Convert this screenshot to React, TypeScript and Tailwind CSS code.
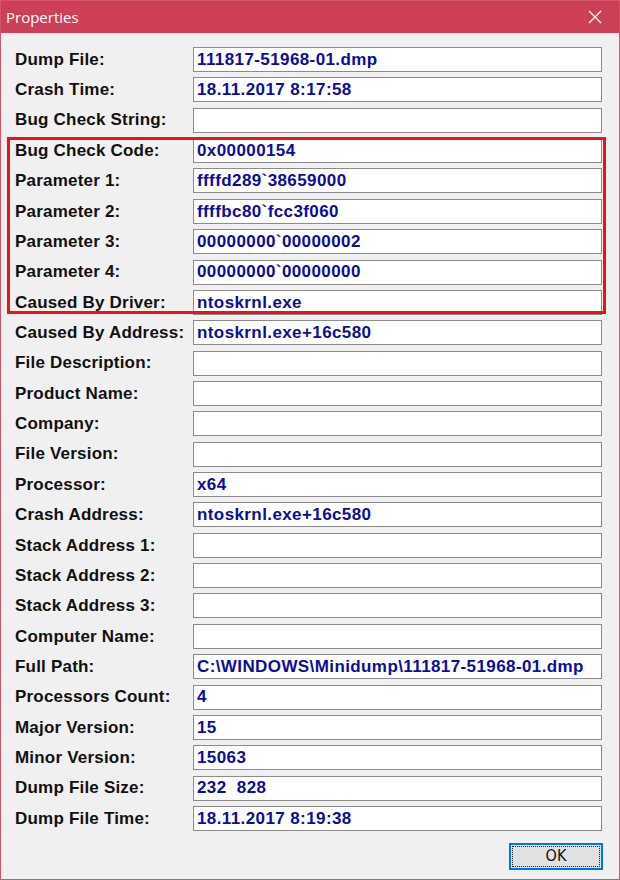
const rows: [string, string][] = [
  ["Dump File:", "111817-51968-01.dmp"],
  ["Crash Time:", "18.11.2017 8:17:58"],
  ["Bug Check String:", ""],
  ["Bug Check Code:", "0x00000154"],
  ["Parameter 1:", "ffffd289`38659000"],
  ["Parameter 2:", "ffffbc80`fcc3f060"],
  ["Parameter 3:", "00000000`00000002"],
  ["Parameter 4:", "00000000`00000000"],
  ["Caused By Driver:", "ntoskrnl.exe"],
  ["Caused By Address:", "ntoskrnl.exe+16c580"],
  ["File Description:", ""],
  ["Product Name:", ""],
  ["Company:", ""],
  ["File Version:", ""],
  ["Processor:", "x64"],
  ["Crash Address:", "ntoskrnl.exe+16c580"],
  ["Stack Address 1:", ""],
  ["Stack Address 2:", ""],
  ["Stack Address 3:", ""],
  ["Computer Name:", ""],
  ["Full Path:", "C:\\WINDOWS\\Minidump\\111817-51968-01.dmp"],
  ["Processors Count:", "4"],
  ["Major Version:", "15"],
  ["Minor Version:", "15063"],
  ["Dump File Size:", "232  828"],
  ["Dump File Time:", "18.11.2017 8:19:38"],
];

export default function App() {
  return (
    <div className="w-[620px] h-[880px] flex flex-col bg-[#f0f0f0] border border-[#d4546a] font-['Liberation_Sans',Arial,sans-serif]">
      {/* title bar */}
      <div className="h-[32px] shrink-0 bg-[#cd3f57] flex items-center justify-between pl-[5px] pr-[16px]">
        <span className="text-white text-[15px] font-['Open_Sans','Liberation_Sans',sans-serif]">Properties</span>
        <svg width="16" height="16" viewBox="0 0 16 16">
          <path d="M2 2 L14 14 M14 2 L2 14" stroke="#fff" strokeWidth="1.3" fill="none" />
        </svg>
      </div>

      <div className="relative flex-1 flex flex-col pt-[14px] pl-[14px]">
        <div className="flex flex-col gap-[5.36px]">
          {rows.map(([label, value]) => (
            <div key={label} className="flex items-center h-[25px]">
              <span className="w-[178px] shrink-0 text-[17px] font-bold text-[#111] tracking-[0.2px] whitespace-nowrap">
                {label}
              </span>
              <div className="w-[409px] h-[25px] bg-white border border-[#8c8c8c] flex items-center pl-[3px] text-[17px] font-bold text-[#0c0c9e] tracking-[0.4px] whitespace-pre">
                {value}
              </div>
            </div>
          ))}
        </div>

        <div className="flex justify-end pr-[16px] mt-[12px]">
          <button className="w-[94px] h-[27px] bg-[#e1e1e1] border-2 border-[#0078d7] flex items-center justify-center p-[1px]">
            <span className="w-full h-full border border-dotted border-[#222] flex items-center justify-center text-[16px] text-[#111] font-['DejaVu_Sans_Condensed','Liberation_Sans',sans-serif]">
              OK
            </span>
          </button>
        </div>

        {/* red highlight annotation */}
        <div className="absolute left-[6px] top-[104px] w-[599px] h-[177px] border-[3px] border-[#ec111b] pointer-events-none" />
      </div>
    </div>
  );
}
